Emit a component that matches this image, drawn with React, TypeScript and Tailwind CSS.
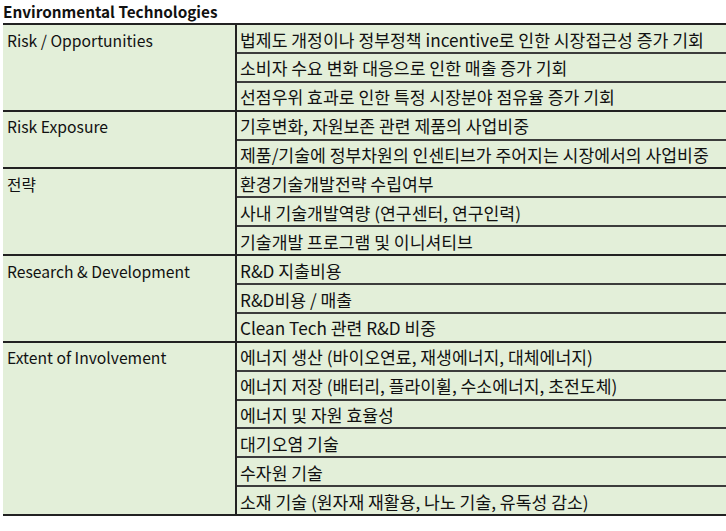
const GROUPS = [
  {
    label: 'Risk / Opportunities',
    rows: [
      '법제도 개정이나 정부정책 incentive로 인한 시장접근성 증가 기회',
      '소비자 수요 변화 대응으로 인한 매출 증가 기회',
      '선점우위 효과로 인한 특정 시장분야 점유율 증가 기회',
    ],
  },
  {
    label: 'Risk Exposure',
    rows: ['기후변화, 자원보존 관련 제품의 사업비중', '제품/기술에 정부차원의 인센티브가 주어지는 시장에서의 사업비중'],
  },
  {
    label: '전략',
    rows: ['환경기술개발전략 수립여부', '사내 기술개발역량 (연구센터, 연구인력)', '기술개발 프로그램 및 이니셔티브'],
  },
  {
    label: 'Research & Development',
    rows: ['R&D 지출비용', 'R&D비용 / 매출', 'Clean Tech 관련 R&D 비중'],
  },
  {
    label: 'Extent of Involvement',
    rows: [
      '에너지 생산 (바이오연료, 재생에너지, 대체에너지)',
      '에너지 저장 (배터리, 플라이휠, 수소에너지, 초전도체)',
      '에너지 및 자원 효율성',
      '대기오염 기술',
      '수자원 기술',
      '소재 기술 (원자재 재활용, 나노 기술, 유독성 감소)',
    ],
  },
]

export default function App() {
  return (
    <div className="w-[726px] h-[531px] bg-white pl-[3px] text-[#111] font-['Noto_Sans_CJK_KR','Noto_Sans',sans-serif]">
      <div className="h-[23px] leading-[22px] text-[15.3px] font-bold">Environmental Technologies</div>

      {/* table */}
      <div className="border-t-2 border-[#222] bg-[#e3efd9]">
        {GROUPS.map((g) => (
          <div key={g.label} className="flex border-b-2 border-[#222]">
            <div className="w-[234px] shrink-0 border-r-2 border-[#222] pl-[4px] pt-[2.5px] text-[15.7px] leading-[26.9px]">
              {g.label}
            </div>
            <div className="flex-1 flex flex-col">
              {g.rows.map((r, i) => (
                <div
                  key={r}
                  className={`pl-[3px] pt-[2.5px] text-[17.2px] leading-[24.4px] whitespace-nowrap ${
                    i > 0 ? 'border-t-2 border-[#3c3c3c] h-[28.9px]' : 'h-[26.9px]'
                  }`}
                >
                  {r}
                </div>
              ))}
            </div>
          </div>
        ))}
      </div>
    </div>
  )
}
